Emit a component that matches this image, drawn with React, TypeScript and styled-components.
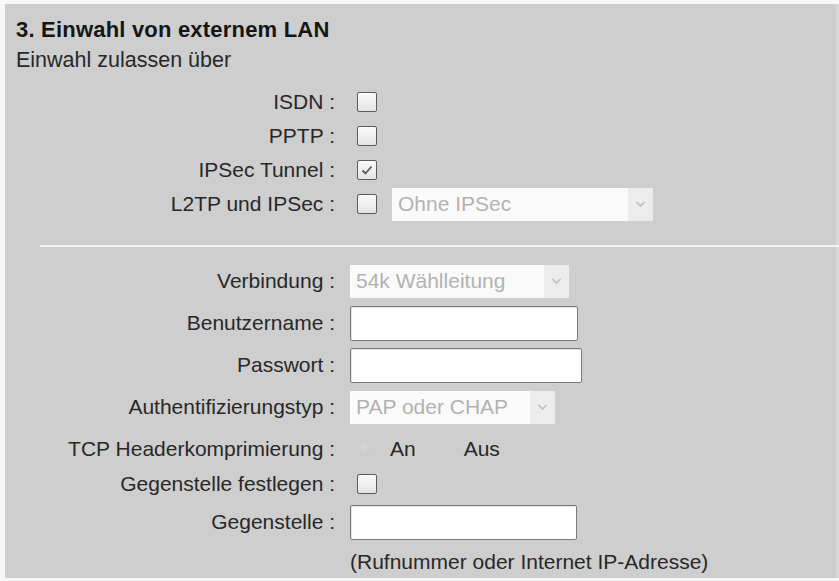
import React from 'react';
import styled, { createGlobalStyle } from 'styled-components';

const GlobalStyle = createGlobalStyle`
  html, body {
    margin: 0;
    padding: 0;
    background: #f7f7f7;
  }
  body {
    font-family: "Liberation Sans", Arial, sans-serif;
  }
`;

const Page = styled.div`
  width: 839px;
  height: 581px;
  box-sizing: border-box;
  padding: 4px 0 3px 5px;
  overflow: hidden;
`;

const Panel = styled.div`
  height: 100%;
  box-sizing: border-box;
  background: #cecece;
  border-right: 3px solid #d8d8d8;
  padding: 13px 0 0 11px;
  color: #282828;
`;

const Heading = styled.h3`
  margin: 0;
  font-size: 22px;
  line-height: 26px;
  letter-spacing: 0.2px;
  font-weight: bold;
  color: #151515;
`;

const Intro = styled.div`
  margin-top: 4px;
  font-size: 21.5px;
  line-height: 26px;
`;

const Group = styled.div<{ top: number }>`
  margin-top: ${({ top }) => top}px;
`;

const Row = styled.div<{ h: number }>`
  display: grid;
  grid-template-columns: 319px 1fr;
  column-gap: 15px;
  align-items: center;
  height: ${({ h }) => h}px;
`;

const Label = styled.label`
  text-align: right;
  font-size: 21px;
  white-space: nowrap;
`;

const Controls = styled.div`
  display: flex;
  align-items: center;
  font-size: 21px;
`;

const Box = styled.span`
  display: inline-flex;
  align-items: center;
  justify-content: center;
  width: 20px;
  height: 20px;
  box-sizing: border-box;
  margin-left: 7px;
  border: 1px solid #5c5c5c;
  border-radius: 2px;
  background: linear-gradient(#fbfbfb, #e4e4e4);
`;

const Separator = styled.div`
  height: 2px;
  margin: 24px -3px 13px 24px;
  background: #f3f3f3;
`;

const TextInput = styled.input<{ w: number }>`
  width: ${({ w }) => w}px;
  height: 35px;
  box-sizing: border-box;
  margin: 0;
  border: 1px solid #7a7a7a;
  border-radius: 2px;
  background: #fff;
  box-shadow: inset 1px 1px 1px rgba(0, 0, 0, 0.12);
  font: inherit;
`;

const SelectBox = styled.div<{ w: number; gap?: number }>`
  display: flex;
  align-items: stretch;
  width: ${({ w }) => w}px;
  height: 33px;
  margin-left: ${({ gap }) => gap ?? 0}px;
  background: #fafafa;
  color: #b2b2b2;
  font-size: 21px;
`;

const SelectText = styled.span`
  flex: 1;
  display: flex;
  align-items: center;
  padding-left: 6px;
  white-space: nowrap;
  overflow: hidden;
`;

const Arrow = styled.span`
  width: 25px;
  display: flex;
  align-items: center;
  justify-content: center;
  background: #ececec;
`;

const Radio = styled.span`
  width: 14px;
  height: 14px;
  margin-left: 9px;
  border-radius: 50%;
  background: radial-gradient(circle at 40% 40%, #d6d6d6, #c6c6c6);
`;

const Option = styled.span<{ gap: number }>`
  margin-left: ${({ gap }) => gap}px;
`;

const Hint = styled.span`
  font-size: 21px;
  white-space: nowrap;
`;

const Chevron = () => (
  <svg width="11" height="8" viewBox="0 0 11 8">
    <path d="M1.5 2 L5.5 6 L9.5 2" fill="none" stroke="#bdbdbd" strokeWidth="1.6" />
  </svg>
);

const Check = () => (
  <svg width="14" height="14" viewBox="0 0 14 14">
    <path d="M2.5 7.5 L5.5 10.5 L11.5 3.5" fill="none" stroke="#5c5c5c" strokeWidth="1.8" />
  </svg>
);

const Select = ({ w, value, gap }: { w: number; value: string; gap?: number }) => (
  <SelectBox w={w} gap={gap}>
    <SelectText>{value}</SelectText>
    <Arrow>
      <Chevron />
    </Arrow>
  </SelectBox>
);

const dialins = [
  { label: 'ISDN', checked: false },
  { label: 'PPTP', checked: false },
  { label: 'IPSec Tunnel', checked: true },
];

export default function App() {
  return (
    <Page>
      <GlobalStyle />
      <Panel>
        <Heading>3. Einwahl von externem LAN</Heading>
        <Intro>Einwahl zulassen über</Intro>

        <Group top={12}>
          {dialins.map((d) => (
            <Row h={34} key={d.label}>
              <Label>{d.label} :</Label>
              <Controls>
                <Box>{d.checked && <Check />}</Box>
              </Controls>
            </Row>
          ))}
          <Row h={34}>
            <Label>L2TP und IPSec :</Label>
            <Controls>
              <Box />
              <Select w={261} value="Ohne IPSec" gap={15} />
            </Controls>
          </Row>
        </Group>

        <Separator />

        <Row h={42}>
          <Label>Verbindung :</Label>
          <Controls>
            <Select w={219} value="54k Wählleitung" />
          </Controls>
        </Row>
        <Row h={42}>
          <Label>Benutzername :</Label>
          <Controls>
            <TextInput w={228} type="text" />
          </Controls>
        </Row>
        <Row h={42}>
          <Label>Passwort :</Label>
          <Controls>
            <TextInput w={232} type="password" />
          </Controls>
        </Row>
        <Row h={42}>
          <Label>Authentifizierungstyp :</Label>
          <Controls>
            <Select w={205} value="PAP oder CHAP" />
          </Controls>
        </Row>
        <Row h={42}>
          <Label>TCP Headerkomprimierung :</Label>
          <Controls>
            <Radio />
            <Option gap={17}>An</Option>
            <Option gap={48}>Aus</Option>
          </Controls>
        </Row>
        <Row h={28}>
          <Label>Gegenstelle festlegen :</Label>
          <Controls>
            <Box />
          </Controls>
        </Row>
        <Row h={48}>
          <Label>Gegenstelle :</Label>
          <Controls>
            <TextInput w={227} type="text" />
          </Controls>
        </Row>
        <Row h={32}>
          <span />
          <Hint>(Rufnummer oder Internet IP-Adresse)</Hint>
        </Row>
      </Panel>
    </Page>
  );
}
